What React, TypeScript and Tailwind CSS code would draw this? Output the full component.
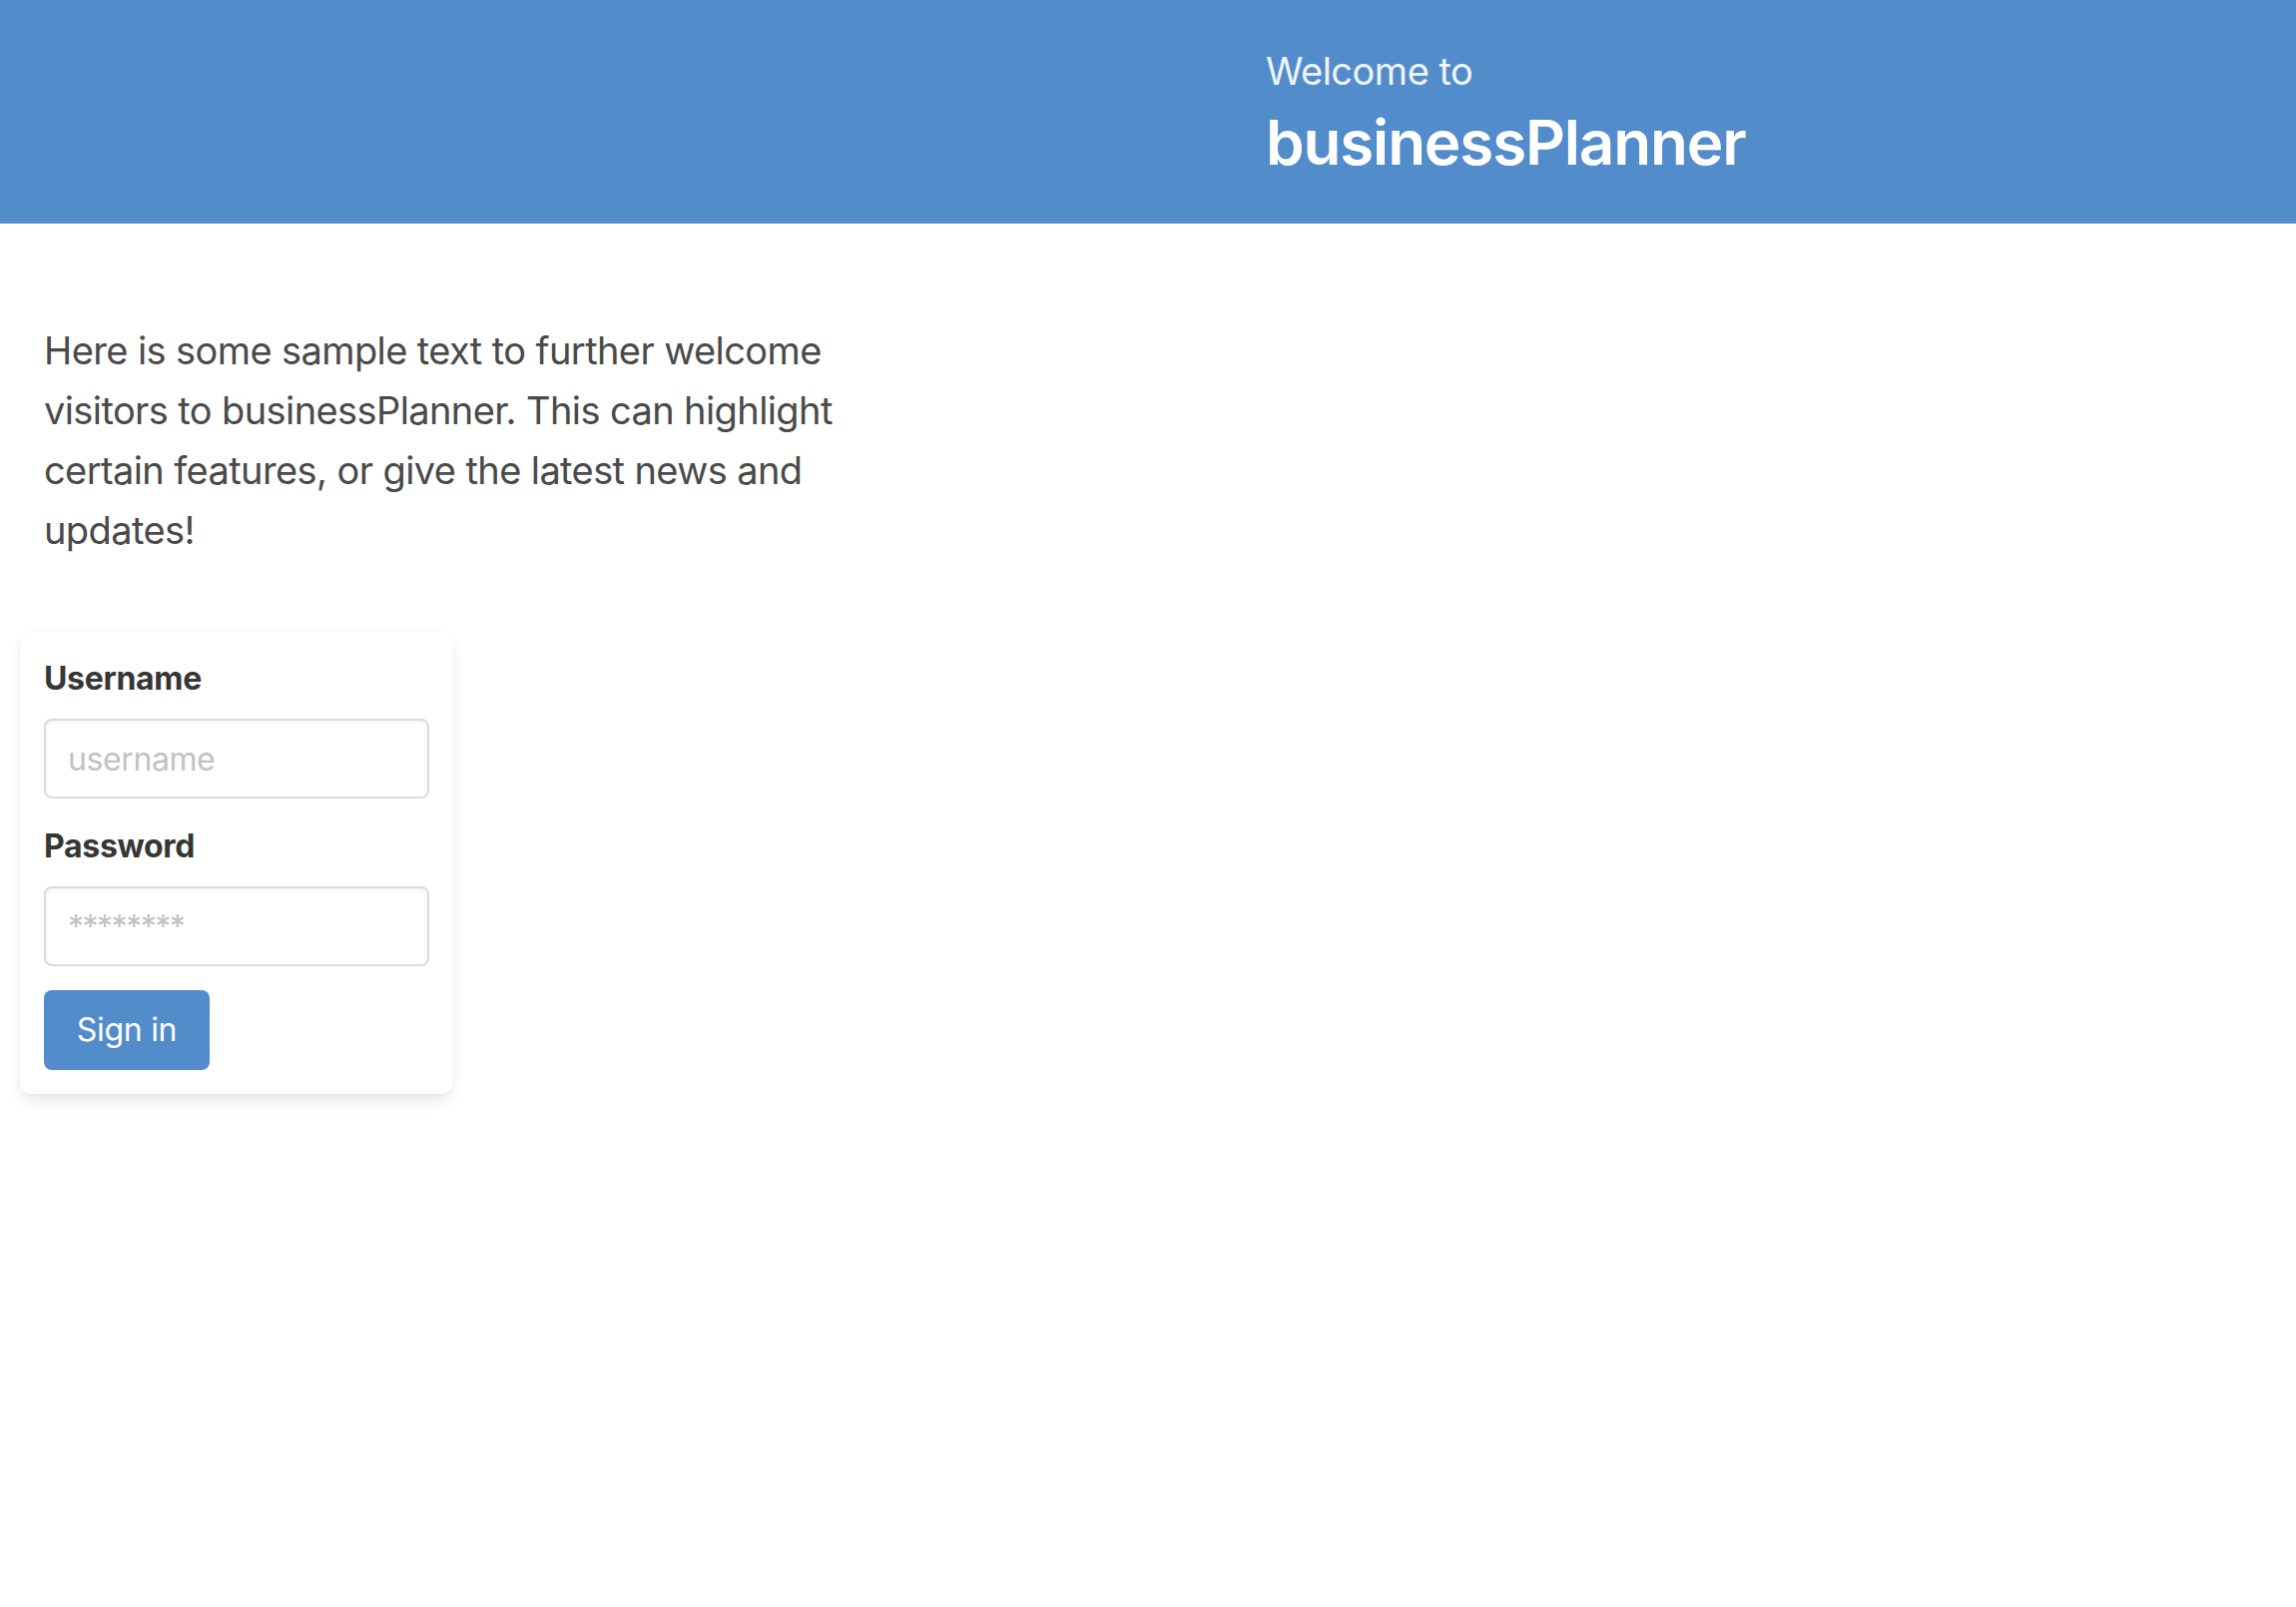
import { useState } from "react";

export default function App() {
  const [username, setUsername] = useState("");
  const [password, setPassword] = useState("");

  return (
    <div
      className="min-h-screen w-full bg-white"
      style={{ fontFamily: '"Inter", "Noto Sans", sans-serif' }}
    >
      {/* Hero */}
      <header className="h-[224px] bg-[#538ccb] pl-[1268px] pt-[46px] text-white">
        <p className="text-[38px] leading-[50px] font-normal tracking-[-0.5px] text-white/90">Welcome to</p>
        <h1 className="mt-[11px] text-[62px] leading-[72px] font-semibold tracking-[-1.2px]">businessPlanner</h1>
      </header>

      <main className="pt-[97px]">
        <p className="ml-[44px] w-[870px] text-[38px] leading-[60px] tracking-[-0.6px] text-[#4a4a4a]">
          Here is some sample text to further welcome visitors to businessPlanner. This can
          highlight certain features, or give the latest news and updates!
        </p>

        <form
          className="mt-[71px] ml-[20px] w-[434px] rounded-[12px] bg-white p-[24px] shadow-[0_8px_16px_-2px_rgba(10,10,10,0.1),0_0_0_1px_rgba(10,10,10,0.02)]"
          onSubmit={e => e.preventDefault()}
        >
          <div className="mb-[24px]">
            <label className="mb-[16px] block text-[32px] leading-[48px] font-bold tracking-[-0.3px] text-[#363636]">
              Username
            </label>
            <input
              type="text"
              value={username}
              onChange={e => setUsername(e.target.value)}
              placeholder="username"
              className="block h-[80px] w-full rounded-[8px] border-2 border-[#dbdbdb] px-[22px] text-[32px] tracking-[-0.4px] text-[#363636] shadow-[inset_0_2px_4px_rgba(10,10,10,0.05)] outline-none placeholder:text-[#c2c2c2]"
            />
          </div>

          <div className="mb-[24px]">
            <label className="mb-[16px] block text-[32px] leading-[48px] font-bold tracking-[-0.3px] text-[#363636]">
              Password
            </label>
            <input
              type="password"
              value={password}
              onChange={e => setPassword(e.target.value)}
              placeholder="********"
              className="block h-[80px] w-full rounded-[8px] border-2 border-[#dbdbdb] px-[22px] text-[32px] tracking-[-1.5px] text-[#363636] shadow-[inset_0_2px_4px_rgba(10,10,10,0.05)] outline-none placeholder:text-[#c2c2c2]"
            />
          </div>

          <button
            type="submit"
            className="flex h-[80px] w-[166px] items-center justify-center rounded-[8px] bg-[#538ccb] text-[32px] tracking-[-0.3px] text-white"
          >
            Sign in
          </button>
        </form>
      </main>
    </div>
  );
}
